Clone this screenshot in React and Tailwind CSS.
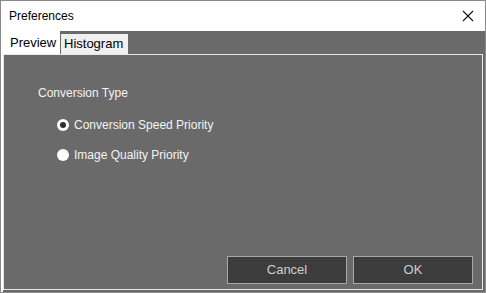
export default function App() {
  const font = { fontFamily: '"Segoe UI", "Liberation Sans", Arial, sans-serif' };

  return (
    <div
      className="w-[486px] h-[293px] border border-[#8a8a8a] bg-white flex flex-col text-[12px]"
      style={font}
    >
      <div className="h-[30px] flex items-center justify-between pl-[8px] pr-[8px] shrink-0">
        <span className="text-black">Preferences</span>
        <svg width="12" height="12" viewBox="0 0 12 12" className="mr-[3px]">
          <path d="M1 1 L11 11 M11 1 L1 11" stroke="#111" strokeWidth="1.1" />
        </svg>
      </div>

      <div className="flex-1 flex flex-col bg-[#6a6a6a] border-l-2 border-white">
        <div className="h-[23px] flex items-end shrink-0">
          <div className="h-[23px] w-[57px] bg-white flex items-center pl-[7px] text-black text-[13px]">
            Preview
          </div>
          <div className="h-[20px] w-[67px] ml-[1px] bg-[#f0f0f0] flex items-center pl-[3px] text-black text-[13px]">
            Histogram
          </div>
        </div>

        <div className="flex-1 flex flex-col border border-[#e8e8e8] mr-[2px] mb-[2px]">
          <div className="pl-[34px] pt-[30px] text-[#f4f4f4]">
            <div className="leading-[16px]">Conversion Type</div>
            <div className="flex flex-col gap-[14px] mt-[16px] pl-[19px]">
              <label className="flex items-center gap-[5px] leading-[16px]">
                <span className="w-[12px] h-[12px] rounded-full bg-white flex items-center justify-center">
                  <span className="w-[6px] h-[6px] rounded-full bg-[#2e2e2e]" />
                </span>
                Conversion Speed Priority
              </label>
              <label className="flex items-center gap-[5px] leading-[16px]">
                <span className="w-[12px] h-[12px] rounded-full bg-white" />
                Image Quality Priority
              </label>
            </div>
          </div>

          <div className="mt-auto flex justify-end gap-[6px] pr-[9px] pb-[5px]">
            <button className="w-[120px] h-[28px] bg-[#3c3c3c] border border-[#a8a8a8] text-[#cfcfcf] text-[13px]">
              Cancel
            </button>
            <button className="w-[120px] h-[28px] bg-[#3c3c3c] border border-[#a8a8a8] text-[#cfcfcf] text-[13px]">
              OK
            </button>
          </div>
        </div>
      </div>
    </div>
  );
}
